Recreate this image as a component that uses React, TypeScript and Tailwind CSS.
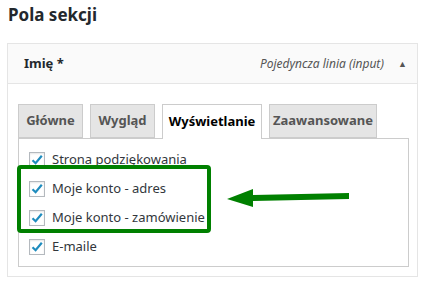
import React from "react"

const tabs = [
  { label: "Główne", active: false, w: "w-[65px]" },
  { label: "Wygląd", active: false, w: "w-[65px]" },
  { label: "Wyświetlanie", active: true, w: "w-[100px]" },
  { label: "Zaawansowane", active: false, w: "w-[108px]" },
]

const opcje = [
  "Strona podziękowania",
  "Moje konto - adres",
  "Moje konto - zamówienie",
  "E-maile",
]

function Checkbox({ label }: { label: string }) {
  return (
    <label className="flex items-center gap-[7px] h-[29px] text-[13px] text-[#32373c]">
      <span className="w-4 h-4 border border-[#b4b9be] bg-white flex items-center justify-center shadow-[inset_0_1px_2px_rgba(0,0,0,0.1)]">
        <svg width="14" height="14" viewBox="0 0 14 14">
          <path d="M2.5 7.2 L5.6 10.2 L11.8 2.8" fill="none" stroke="#1e8cbe" strokeWidth="2.2" />
        </svg>
      </span>
      {label}
    </label>
  )
}

export default function App() {
  return (
    <div
      className="w-[428px] h-[281px] bg-white relative overflow-hidden pl-[7px] pr-[10px] pt-[3px]"
      style={{ fontFamily: "'Noto Sans', 'Open Sans', sans-serif" }}
    >

      <h1 className="pl-[1px] text-[17px] leading-[23px] font-bold text-[#23282d]">
        Pola sekcji
      </h1>

      {/* pole */}

      <div className="mt-[17px] h-[234px] border border-[#e5e5e5]">

        <div className="h-[40px] bg-[#fafafa] border-b border-[#e5e5e5] flex items-center pl-[16px] pr-[10px]">
          <span className="text-[13px] font-bold text-[#23282d]">Imię *</span>
          <span className="ml-auto text-[12px] italic text-[#555]">Pojedyncza linia (input)</span>
          <span className="ml-[14px] text-[9px] text-[#555]">▲</span>
        </div>

        <div className="pl-[10px] pr-[8px] pt-[19px]">

          <div className="flex gap-[7px] h-[35px] items-end">
            {tabs.map(t => (
              <div
                key={t.label}
                className={
                  t.active
                    ? "h-[35px] px-[10px] flex items-center justify-center border border-b-0 border-[#ccc] bg-white text-black text-[13px] font-bold relative top-[1px] " + t.w
                    : "h-[34px] px-[10px] flex items-center justify-center border border-[#ccc] bg-[#e5e5e5] text-[#555] text-[13px] font-bold " + t.w
                }
              >
                {t.label}
              </div>
            ))}
          </div>

          <div className="border border-[#ccc] h-[129px] pl-[10px] pt-[6px]">
            {opcje.map(o => (
              <Checkbox key={o} label={o} />
            ))}
          </div>

        </div>

      </div>

      {/* zaznaczenie */}

      <div className="absolute left-[17px] top-[165px] w-[194px] h-[68px] border-[4px] border-[#008000] rounded-[4px]" />

      <svg className="absolute left-0 top-0" width="428" height="281">
        <path d="M349 193 L349 199 L253 201 L253 207 L227 199 L253 189 L253 195 Z" fill="#008000" />
      </svg>

    </div>
  )
}
